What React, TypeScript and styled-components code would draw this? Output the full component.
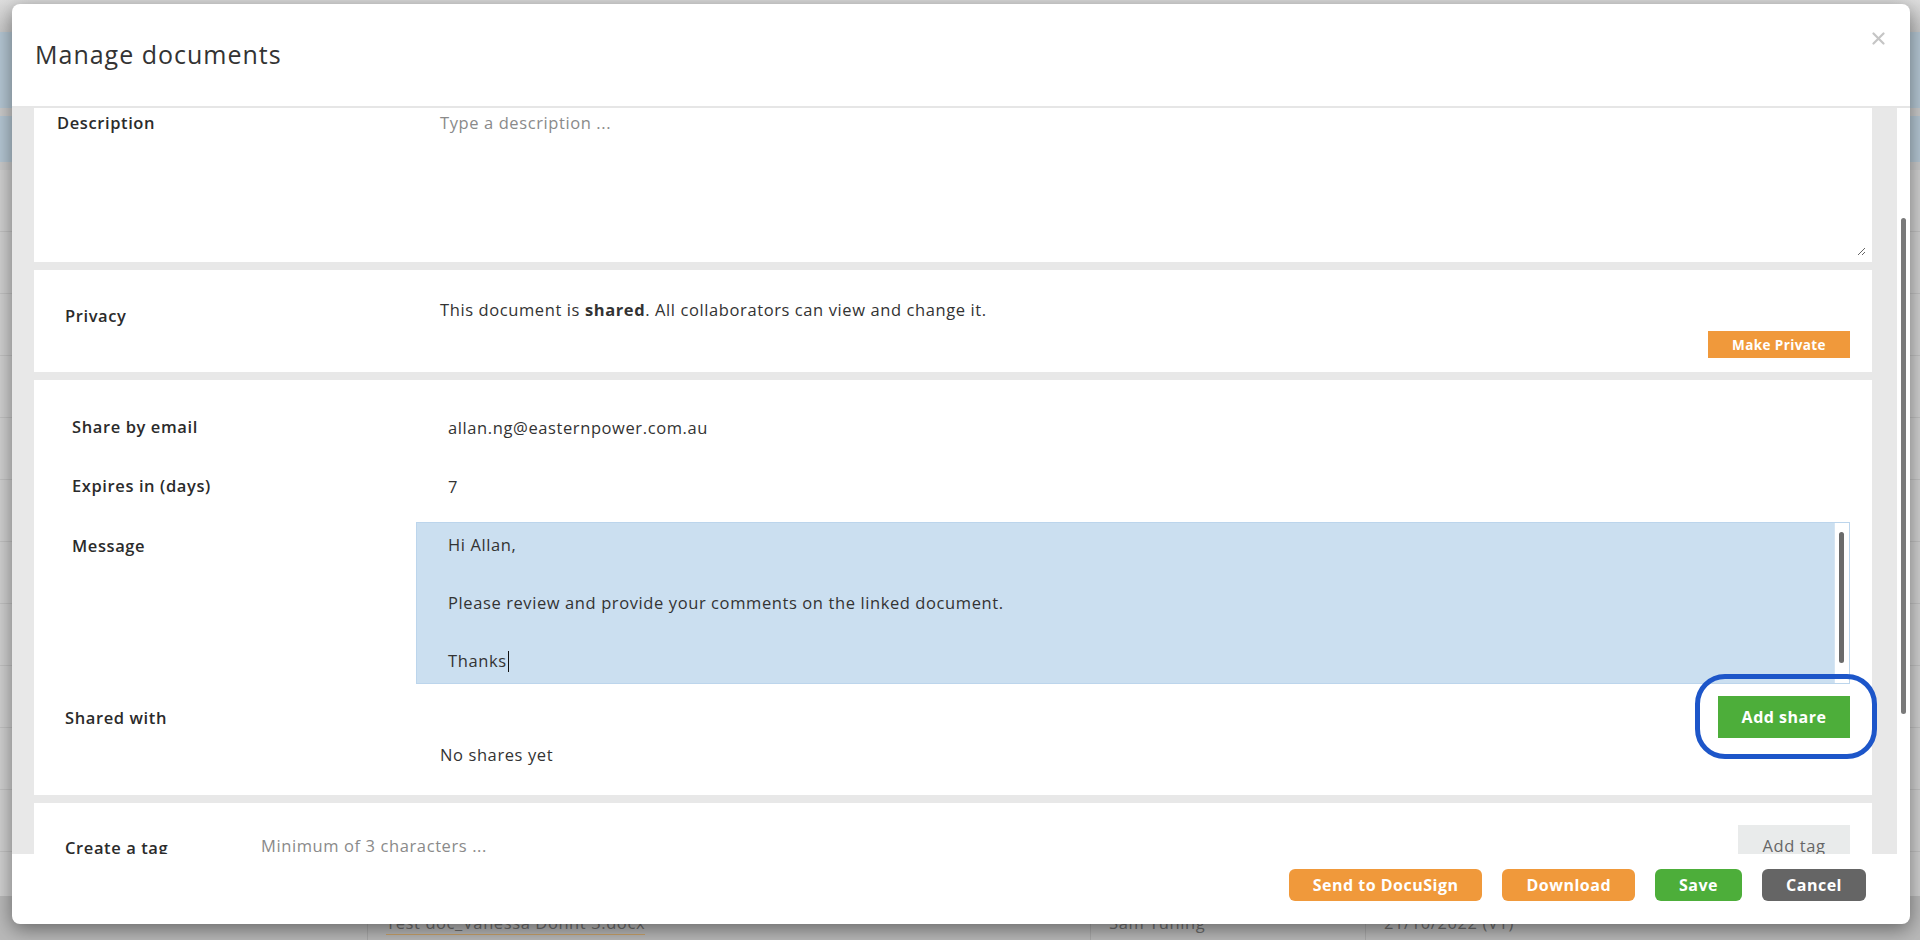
import React from 'react'
import styled, { createGlobalStyle } from 'styled-components'

//=> Message body, one entry per line ('' = blank line)
const MESSAGE = ['Hi Allan,', '', 'Please review and provide your comments on the linked document.', '']

//=> DOM
export default () => {
	return (
		<>
			<GlobalStyle />
			<Backdrop>
				<BgTop />
				<BgBand $h={76} />
				<BgBand $h={46} />
				<BgRows />
				<BgRow>
					<BgCell />
					<BgCell>
						<BgLink>Test doc_Vanessa Dohnt 3.docx</BgLink>
					</BgCell>
					<BgCell>Sam Tuning</BgCell>
					<BgCell>21/10/2022 (V1)</BgCell>
				</BgRow>

				<Modal role='dialog' aria-label='Manage documents'>
					<Header>
						<Title>Manage documents</Title>
						<Close aria-label='Close'>
							<svg width='13' height='13' viewBox='0 0 13 13'>
								<path d='M1.5 1.5 L11.5 11.5 M11.5 1.5 L1.5 11.5' stroke='#c5c5c5' strokeWidth='2.2' strokeLinecap='round' />
							</svg>
						</Close>
					</Header>

					<Body>
						<ScrollArea>
							{/* Description */}
							<DescriptionPanel>
								<Label $pt={3}>Description</Label>
								<DescriptionInput placeholder='Type a description ...' />
							</DescriptionPanel>

							{/* Privacy */}
							<PrivacyPanel>
								<Label $pt={34}>Privacy</Label>
								<PrivacyContent>
									<p>
										This document is <b>shared</b>. All collaborators can view and change it.
									</p>
									<MakePrivate>Make Private</MakePrivate>
								</PrivacyContent>
							</PrivacyPanel>

							{/* Share */}
							<SharePanel>
								<ShareForm>
									<Label $lh={38}>Share by email</Label>
									<FieldInput defaultValue='allan.ng@easternpower.com.au' />
									<Label $lh={38}>Expires in (days)</Label>
									<FieldInput defaultValue='7' />
									<MessageLabel $pt={12}>Message</MessageLabel>
									<MessageBox>
										<MessageText>
											{MESSAGE.map((line, i) => (
												<Line key={i}>{line}</Line>
											))}
											<Line>
												Thanks
												<Caret />
											</Line>
										</MessageText>
										<MiniTrack>
											<MiniThumb />
										</MiniTrack>
									</MessageBox>
								</ShareForm>

								<SharedSection>
									<Label $pt={10}>Shared with</Label>
									<SharedContent>
										<Highlight>
											<AddShare>Add share</AddShare>
										</Highlight>
										<NoShares>No shares yet</NoShares>
									</SharedContent>
								</SharedSection>
							</SharePanel>

							{/* Tags */}
							<TagPanel>
								<Label $pt={11}>Create a tag</Label>
								<TagInput placeholder='Minimum of 3 characters ...' />
								<AddTag>Add tag</AddTag>
							</TagPanel>
						</ScrollArea>

						<ScrollTrack>
							<ScrollThumb />
						</ScrollTrack>
					</Body>

					<Footer>
						<ActionButton $tone='orange'>Send to DocuSign</ActionButton>
						<ActionButton $tone='orange'>Download</ActionButton>
						<ActionButton $tone='green'>Save</ActionButton>
						<ActionButton $tone='gray'>Cancel</ActionButton>
					</Footer>
				</Modal>
			</Backdrop>
		</>
	)
}

//=> Style
const TONES = {
	orange: '#f0993b',
	green: '#4dae3a',
	gray: '#656565'
}

const GlobalStyle = createGlobalStyle`
	html, body {
		margin: 0;
		padding: 0;
	}
	body {
		font-family: 'Open Sans', 'Noto Sans', sans-serif;
		font-size: 16.5px;
		letter-spacing: 0.6px;
		color: #333;
	}
	* {
		box-sizing: border-box;
	}
	button, input, textarea {
		font: inherit;
		letter-spacing: inherit;
		color: inherit;
	}
`

const Backdrop = styled.div`
	position: relative;
	width: 1920px;
	height: 940px;
	overflow: hidden;
	display: flex;
	flex-direction: column;
	background: #cbcbcb;
`

const BgTop = styled.div`
	height: 32px;
	background: linear-gradient(#dedede, #c9c9c9);
`

const BgBand = styled.div<{ $h: number }>`
	height: ${p => p.$h}px;
	margin-bottom: 8px;
	background: #b5c7d4;
`

const BgRows = styled.div`
	flex: 1;
	background: repeating-linear-gradient(to bottom, #d1d1d1 0 61px, #c2c2c2 61px 62px);
`

const BgRow = styled.div`
	height: 44px;
	display: grid;
	grid-template-columns: 367px 723px 275px 1fr;
	background: #b9b9b9;
	color: #6d6d6d;
`

const BgCell = styled.div`
	padding: 16px 0 0 18px;
	border-left: 1px solid #a9a9a9;
	line-height: 22px;
	&:first-child {
		border-left: none;
	}
`

const BgLink = styled.span`
	border-bottom: 1px solid #c9a36a;
`

const Modal = styled.div`
	position: absolute;
	left: 12px;
	top: 4px;
	width: 1898px;
	height: 920px;
	display: flex;
	flex-direction: column;
	overflow: hidden;
	background: #fff;
	border-radius: 8px;
	box-shadow: 0 5px 20px rgba(0, 0, 0, 0.45);
`

const Header = styled.header`
	flex: 0 0 104px;
	display: flex;
	justify-content: space-between;
	align-items: flex-start;
	padding: 26px 25px 0 23px;
	border-bottom: 2px solid #e6e6e6;
`

const Title = styled.h2`
	margin: 0;
	font-size: 25px;
	font-weight: 400;
	letter-spacing: 1px;
	line-height: 48px;
	color: #333;
`

const Close = styled.button`
	margin-top: 2px;
	padding: 0;
	border: none;
	background: none;
	line-height: 0;
	cursor: pointer;
`

const Body = styled.div`
	flex: 1;
	min-height: 0;
	display: flex;
`

const ScrollArea = styled.div`
	flex: 1;
	display: flex;
	flex-direction: column;
	gap: 8px;
	overflow: hidden;
	padding: 0 25px 0 22px;
	background: #e8e8e8;
`

const ScrollTrack = styled.div`
	width: 13px;
	padding: 110px 0 0 4px;
	background: #fff;
`

const ScrollThumb = styled.div`
	width: 5px;
	height: 496px;
	border-radius: 3px;
	background: #7a7a7a;
`

const Panel = styled.section`
	flex-shrink: 0;
	background: #fff;
`

const Label = styled.div<{ $pt?: number; $lh?: number }>`
	padding-top: ${p => p.$pt ?? 0}px;
	line-height: ${p => p.$lh ?? 24}px;
	font-weight: 600;
	color: #2b2b2b;
	white-space: nowrap;
`

const MessageLabel = styled(Label)`
	align-self: start;
`

const DescriptionPanel = styled(Panel)`
	height: 154px;
	display: grid;
	grid-template-columns: 373px 1fr;
	padding: 0 6px 6px 23px;
`

const DescriptionInput = styled.textarea`
	height: 100%;
	padding: 3px 10px;
	border: none;
	outline: none;
	resize: vertical;
	line-height: 24px;
	background: #fff;
	&::placeholder {
		color: #8a8a8a;
	}
`

const PrivacyPanel = styled(Panel)`
	height: 102px;
	display: grid;
	grid-template-columns: 375px 1fr;
	padding: 0 22px 14px 31px;
`

const PrivacyContent = styled.div`
	display: flex;
	flex-direction: column;
	padding-top: 28px;
	p {
		margin: 0;
		line-height: 24px;
	}
	b {
		font-weight: 700;
	}
`

const MakePrivate = styled.button`
	align-self: flex-end;
	width: 142px;
	height: 27px;
	margin-top: 9px;
	padding: 0;
	border: none;
	background: ${TONES.orange};
	color: #fff;
	font-size: 13.5px;
	font-weight: 700;
	letter-spacing: 0.4px;
`

const SharePanel = styled(Panel)`
	display: flex;
	flex-direction: column;
	padding-bottom: 28px;
`

const ShareForm = styled.div`
	display: grid;
	grid-template-columns: 344px 1fr;
	grid-template-rows: 38px 42px 162px;
	row-gap: 17px;
	align-items: end;
	padding: 28px 22px 0 38px;
`

const FieldInput = styled.input`
	height: 38px;
	padding: 0 0 0 32px;
	border: none;
	outline: none;
	background: transparent;
`

const MessageBox = styled.div`
	height: 162px;
	display: flex;
	border: 1px solid #bcd5ec;
	background: #cbdff0;
`

const MessageText = styled.div`
	flex: 1;
	padding: 7px 0 0 31px;
	line-height: 29px;
`

const Line = styled.div`
	min-height: 29px;
`

const Caret = styled.span`
	display: inline-block;
	width: 1.5px;
	height: 21px;
	margin-left: 1px;
	vertical-align: -5px;
	background: #111;
`

const MiniTrack = styled.div`
	width: 15px;
	padding: 9px 0 0 4px;
	border-left: 1px solid #d5e5f3;
	background: #fff;
`

const MiniThumb = styled.div`
	width: 5px;
	height: 131px;
	border-radius: 3px;
	background: #6b6b6b;
`

const SharedSection = styled.div`
	display: grid;
	grid-template-columns: 375px 1fr;
	padding: 12px 22px 0 31px;
`

const SharedContent = styled.div`
	display: flex;
	flex-direction: column;
`

//=> Annotation ring drawn around the button
const Highlight = styled.div`
	position: relative;
	align-self: flex-end;
	&::after {
		content: '';
		position: absolute;
		inset: -22px -27px -21px -23px;
		border: 5px solid #1d56c9;
		border-radius: 30px;
		pointer-events: none;
	}
`

const AddShare = styled.button`
	display: block;
	width: 132px;
	height: 42px;
	padding: 0;
	border: none;
	background: ${TONES.green};
	color: #fff;
	font-size: 16px;
	font-weight: 700;
	letter-spacing: 0.5px;
`

const NoShares = styled.div`
	margin-top: 5px;
	line-height: 24px;
`

const TagPanel = styled(Panel)`
	height: 90px;
	display: grid;
	grid-template-columns: 186px 1fr 112px;
	align-items: start;
	padding: 22px 22px 0 31px;
`

const TagInput = styled.input`
	height: 40px;
	padding: 0 10px;
	border: none;
	outline: none;
	background: transparent;
	&::placeholder {
		color: #8a8a8a;
	}
`

const AddTag = styled.button`
	height: 40px;
	padding: 0;
	border: none;
	background: #e9ebeb;
	color: #666;
`

const Footer = styled.footer`
	flex: 0 0 70px;
	display: flex;
	justify-content: flex-end;
	align-items: flex-start;
	gap: 20px;
	padding: 15px 44px 0 0;
`

const ActionButton = styled.button<{ $tone: keyof typeof TONES }>`
	height: 32px;
	padding: 0 24px;
	border: none;
	border-radius: 6px;
	background: ${p => TONES[p.$tone]};
	color: #fff;
	font-size: 16px;
	font-weight: 700;
	letter-spacing: 0.5px;
	cursor: pointer;
`
